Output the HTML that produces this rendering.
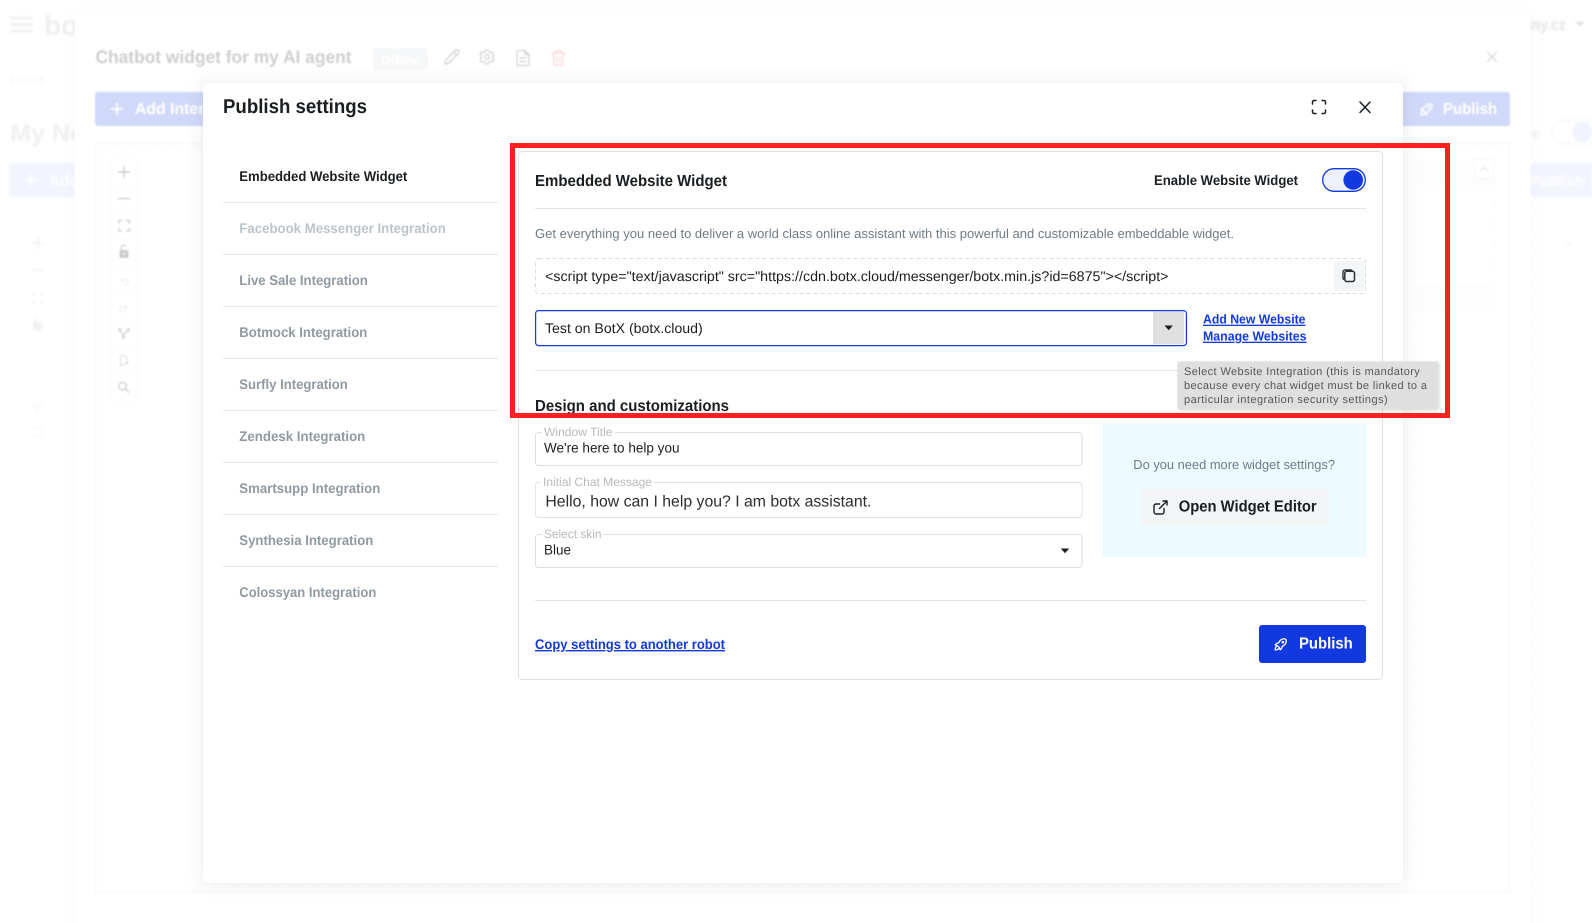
<!DOCTYPE html>
<html lang="en"><head><meta charset="utf-8"><title>Publish settings</title>
<style>
html,body{margin:0;padding:0;background:#fff;width:1592px;height:923px;overflow:hidden}
svg{display:block}
text{font-family:"Liberation Sans",Arial,sans-serif;white-space:pre;text-rendering:geometricPrecision}
.b{font-weight:700}
.ic{fill:none;stroke-linecap:round;stroke-linejoin:round}
</style></head><body>
<svg xmlns="http://www.w3.org/2000/svg" width="1592" height="923" viewBox="0 0 1592 923">
<defs>
<pattern id="dots" width="20" height="20" patternUnits="userSpaceOnUse" x="15" y="-16"><rect x="0" y="0" width="1" height="1" fill="#ececec"/></pattern>
<pattern id="dots2" width="20" height="20" patternUnits="userSpaceOnUse" x="15" y="-6"><rect x="0" y="0" width="1" height="1" fill="#f6f6f6"/></pattern>
<filter id="bl" x="-5%" y="-5%" width="110%" height="110%"><feGaussianBlur stdDeviation="0.7"/></filter>
<filter id="bl2" x="-5%" y="-5%" width="110%" height="110%"><feGaussianBlur stdDeviation="1"/></filter>
<filter id="sh" x="-5%" y="-5%" width="110%" height="110%"><feDropShadow dx="0" dy="0" stdDeviation="9" flood-color="#000" flood-opacity=".09"/></filter>
<filter id="sh2" x="-5%" y="-5%" width="110%" height="110%"><feDropShadow dx="0" dy="0" stdDeviation="10" flood-color="#000" flood-opacity=".02"/></filter>
<filter id="tt" x="-5%" y="-10%" width="110%" height="120%"><feDropShadow dx="1" dy="1" stdDeviation="1.5" flood-color="#000" flood-opacity=".14"/></filter>
<clipPath id="leftclip"><rect x="0" y="0" width="75" height="923"/></clipPath>
<clipPath id="rightclip"><rect x="1530" y="0" width="62" height="923"/></clipPath>
<clipPath id="bgclip"><rect x="75" y="15" width="1455" height="908"/></clipPath>
</defs>

<!-- base layer (furthest back) -->
<g filter="url(#bl2)">
  <g clip-path="url(#leftclip)">
    <g stroke="#eee" stroke-width="2.4"><path d="M11 18H33M11 24.500H33M11 31H33"/></g>
    <text x="44" y="35" class="b" font-size="28" fill="#efefef" textLength="44" lengthAdjust="spacingAndGlyphs">bot</text>
    <text x="10" y="84" font-size="12" fill="#f5f5f5" textLength="34" lengthAdjust="spacingAndGlyphs">Home</text>
    <text x="10" y="141" class="b" font-size="24" fill="#efefef" textLength="84" lengthAdjust="spacingAndGlyphs">My Not</text>
    <rect x="9" y="163" width="80" height="34" rx="3" fill="#f3f5fe"/>
    <path d="M25 180H37M31 174V186" stroke="#fff" stroke-width="2"/>
    <text x="49" y="186" class="b" font-size="16" fill="#fff" textLength="30" lengthAdjust="spacingAndGlyphs">Add</text>
    <rect x="0" y="214" width="75" height="709" fill="url(#dots2)"/>
    <g stroke="#f1f1f1" stroke-width="1.500" fill="none">
      <path d="M32 243H44M38 237V249M32 270H44"/>
      <path d="M33 296V293H36M40 293H43V296M43 300V303H40M36 303H33V300"/>
    </g>
    <rect x="33" y="322" width="9" height="8" rx="1" fill="#f1f1f1"/>
    <path d="M35 322v-2a2.500 2.500 0 0 1 4.500-1.500" fill="none" stroke="#f1f1f1" stroke-width="1.200"/>
    <path d="M33 404L37 408V413M41 404L37 408" stroke="#f3f3f3" stroke-width="1.500" fill="none"/>
    <path d="M34 428h6l2 2v7h-8z" stroke="#f5f5f5" fill="none"/>
  </g>
  <g clip-path="url(#rightclip)">
    <text x="1486" y="30" class="b" font-size="16" fill="#e4e4e4" textLength="80" lengthAdjust="spacingAndGlyphs">company.cz</text>
    <path d="M1575 21.500h9.500l-4.750 5.500z" fill="#e4e4e4"/>
    <text x="1510" y="138" font-size="14" class="b" fill="#efefef" textLength="30" lengthAdjust="spacingAndGlyphs">Live</text>
    <rect x="1552" y="120.500" width="50" height="23" rx="11.500" fill="#fff" stroke="#f1f3fb"/>
    <circle cx="1582" cy="132" r="10" fill="#f1f3fd"/>
    <rect x="1530" y="163" width="80" height="34" rx="3" fill="#f3f5fe"/>
    <text x="1530" y="186" class="b" font-size="16" fill="#fff" textLength="54" lengthAdjust="spacingAndGlyphs">Publish</text>
    <rect x="1530" y="214" width="62" height="709" fill="url(#dots2)"/>
    <path d="M1564 213l5 3.500 5-3.500" transform="translate(0 28)" fill="none" stroke="#f3f3f3"/>
  </g>
</g>

<!-- second layer -->
<rect x="75" y="15" width="1455" height="920" fill="#fff" filter="url(#sh2)"/>
<g clip-path="url(#bgclip)" filter="url(#bl)">
  <text x="95.500" y="63" class="b" font-size="18" fill="#cfcfcf" textLength="256" lengthAdjust="spacingAndGlyphs">Chatbot widget for my AI agent</text>
  <rect x="373" y="48" width="55" height="22" rx="3" fill="#f5f7f8"/>
  <text x="381" y="65" class="b" font-size="14" fill="#fff" textLength="39" lengthAdjust="spacingAndGlyphs">Offline</text>
  <g class="ic" stroke="#d4d4d4" stroke-width="1.300">
    <path d="M445 64l1-4 9-9.500c1-1 2-1 3 0s1 2 0 3l-9 9.500z M453.500 52l3.500 3.500"/>
    <circle cx="487" cy="57" r="2.300"/>
    <path d="M485.500 50h3l.5 1.800 1.700.9 1.800-.5 1.500 2.600-1.300 1.300v1.900l1.300 1.300-1.500 2.600-1.800-.5-1.700.9-.5 1.800h-3l-.5-1.800-1.700-.9-1.800.5-1.500-2.600 1.300-1.300v-1.900l-1.300-1.300 1.500-2.600 1.800.5 1.700-.9z"/>
    <path d="M518 50.500h7l4 4v10a1 1 0 0 1-1 1h-10a1 1 0 0 1-1-1v-13a1 1 0 0 1 1-1z M525 50.500v4h4 M520 58h6M520 61.500h6"/>
  </g>
  <g class="ic" stroke="#fcd8d8" stroke-width="1.300"><path d="M552 53h13M556 53v-1.500a1 1 0 0 1 1-1h3a1 1 0 0 1 1 1V53M553.500 53l.8 11a1.500 1.500 0 0 0 1.500 1h5.400a1.500 1.500 0 0 0 1.500-1l.8-11M557 56.500v5.500M560 56.500v5.500"/></g>
  <path d="M1487 52l10 10M1497 52l-10 10" stroke="#d4d4d4" stroke-width="1.200" fill="none"/>
  <rect x="95" y="92" width="130" height="34" rx="3" fill="#d0d9f9"/>
  <path d="M111 109H123M117 103V115" stroke="#fff" stroke-width="1.800"/>
  <text x="135" y="114" class="b" font-size="16" fill="#fff" textLength="78" lengthAdjust="spacingAndGlyphs">Add Intent</text>
  <rect x="1380" y="92" width="130" height="34" rx="3" fill="#d0d9f9"/>
  <g transform="translate(1418.500 101) scale(.68)" class="ic" stroke="#fff" stroke-width="2"><path d="M4 13a8 8 0 0 1 7 7a6 6 0 0 0 3-5a9 9 0 0 0 6-8a3 3 0 0 0-3-3a9 9 0 0 0-8 6a6 6 0 0 0-5 3"/><path d="M7 14a6 6 0 0 0-3 6a6 6 0 0 0 6-3"/><circle cx="15" cy="9" r="1"/></g>
  <text x="1443" y="114" class="b" font-size="16" fill="#fff" textLength="54" lengthAdjust="spacingAndGlyphs">Publish</text>
  <rect x="95.500" y="143.500" width="1414" height="748" fill="#fff" stroke="#f4f4f4"/>
  <rect x="96" y="144" width="1413" height="747" fill="url(#dots)"/>
  <rect x="1410" y="159" width="84" height="26" fill="#fdfdfd"/>
  <rect x="1410" y="185" width="84" height="125" fill="#fff" stroke="#fcfcfc"/>
  <rect x="1410" y="285" width="84" height="27" fill="#fdfdfd"/>
  <rect x="1474.500" y="159.500" width="19" height="19" fill="#fff" stroke="#f6f6f6"/>
  <path d="M1480 171l4-3.500 4 3.500" fill="none" stroke="#e2e2e2"/>
  <!-- toolbar -->
  <rect x="110.500" y="158.500" width="27" height="243" fill="#fff" stroke="#fafafa"/>
  <path d="M110 185.500h28M110 212.500h28M110 239.500h28M110 266.500h28M110 293.500h28M110 320.500h28M110 347.500h28M110 374.500h28" stroke="#fafafa"/>
  <path d="M118 172H130M124 166V178M118 198.500H130" stroke="#ccc" stroke-width="1.500" fill="none"/>
  <path d="M119 224V220.500H122M126 220.500H129.500V224M129.500 228V231H126M122 231H119V228" stroke="#ccc" stroke-width="1.300" fill="none"/>
  <rect x="119.500" y="250" width="9" height="8" rx="1" fill="#ccc"/><path d="M121.500 250v-2.500a2.500 2.500 0 0 1 4.500-1.200" fill="none" stroke="#ccc" stroke-width="1.200"/><circle cx="124" cy="254" r="1" fill="#fff"/>
  <path d="M121 280h5a2.500 2.500 0 0 1 0 5h-2M121 280l2-2M121 280l2 2" fill="none" stroke="#ececec"/>
  <path d="M127 307h-5a2.500 2.500 0 0 0 0 5h2M127 307l-2-2M127 307l-2 2" fill="none" stroke="#ececec"/>
  <g class="ic" stroke="#ccc" stroke-width="1.100"><circle cx="120" cy="330" r="1.200"/><circle cx="128" cy="330" r="1.200"/><circle cx="123.500" cy="337" r="1.200"/><path d="M120.500 331.500l2.500 2.500v2M127.500 331.500l-3.500 2.500"/></g>
  <path d="M120.500 355.500h4l2.500 2.500v2M120.500 355.500v9.500h5M125 362.500h3l-1.500-1.500M128 362.500l-1.500 1.500" fill="none" stroke="#d6d6d6"/>
  <circle cx="122.500" cy="386" r="3.700" fill="none" stroke="#ccc" stroke-width="1.400"/><path d="M125.500 389l3.500 3.500" stroke="#ccc" stroke-width="1.500"/>
</g>

<!-- modal -->
<rect x="203" y="83" width="1200" height="800" rx="6" fill="#fff" filter="url(#sh)"/>
<text x="223" y="113" class="b" font-size="20" fill="#1a1e21" textLength="144" lengthAdjust="spacingAndGlyphs">Publish settings</text>
<path d="M1312.500 104V102a1.500 1.500 0 0 1 1.500-1.500H1316M1322 100.500h2a1.500 1.500 0 0 1 1.500 1.500V104M1325.500 110v2a1.500 1.500 0 0 1-1.500 1.500H1322M1316 113.500h-2a1.500 1.500 0 0 1-1.500-1.500v-2" fill="none" stroke="#1a1e21" stroke-width="1.500" stroke-linecap="round"/>
<path d="M1360 102l10 10.500M1370 102l-10 10.500" stroke="#1a1e21" stroke-width="1.500" stroke-linecap="round"/>

<!-- sidebar -->
<g class="b" font-size="14">
<text x="239.300" y="181" fill="#1a1e21" textLength="168" lengthAdjust="spacingAndGlyphs">Embedded Website Widget</text>
<text x="239.300" y="233" fill="#bcc4ca" textLength="206.500" lengthAdjust="spacingAndGlyphs">Facebook Messenger Integration</text>
<text x="239.300" y="285" fill="#8e9aa1" textLength="128.500" lengthAdjust="spacingAndGlyphs">Live Sale Integration</text>
<text x="239.300" y="337" fill="#8e9aa1" textLength="128" lengthAdjust="spacingAndGlyphs">Botmock Integration</text>
<text x="239.300" y="389" fill="#8e9aa1" textLength="108.500" lengthAdjust="spacingAndGlyphs">Surfly Integration</text>
<text x="239.300" y="441" fill="#8e9aa1" textLength="126" lengthAdjust="spacingAndGlyphs">Zendesk Integration</text>
<text x="239.300" y="493" fill="#8e9aa1" textLength="141" lengthAdjust="spacingAndGlyphs">Smartsupp Integration</text>
<text x="239.300" y="545" fill="#8e9aa1" textLength="134" lengthAdjust="spacingAndGlyphs">Synthesia Integration</text>
<text x="239.300" y="597" fill="#8e9aa1" textLength="137" lengthAdjust="spacingAndGlyphs">Colossyan Integration</text>
</g>
<path d="M223 202.500H498M223 254.500H498M223 306.500H498M223 358.500H498M223 410.500H498M223 462.500H498M223 514.500H498M223 566.500H498" stroke="#e3e6e8"/>

<!-- card -->
<rect x="518.500" y="151.500" width="864" height="528" rx="4" fill="#fff" stroke="#dfdfdf"/>
<text x="535" y="186" class="b" font-size="16" fill="#1a1e21" textLength="192" lengthAdjust="spacingAndGlyphs">Embedded Website Widget</text>
<text x="1154" y="185" class="b" font-size="14" fill="#1a1e21" textLength="144" lengthAdjust="spacingAndGlyphs">Enable Website Widget</text>
<rect x="1322.700" y="168.700" width="42.600" height="22.600" rx="11.300" fill="#eef1fd" stroke="#1239e0" stroke-width="1.300"/>
<circle cx="1353.200" cy="180" r="9.800" fill="#1239e0"/>
<path d="M535 208.500H1366" stroke="#e3e6e8"/>
<text x="535" y="238" font-size="13" fill="#6e7c87" textLength="699" lengthAdjust="spacingAndGlyphs">Get everything you need to deliver a world class online assistant with this powerful and customizable embeddable widget.</text>

<rect x="535.500" y="258.500" width="830" height="35" rx="3" fill="#fff" stroke="#dcdcdc" stroke-dasharray="4 3"/>
<text x="545" y="281" font-size="14" fill="#1a1e21" textLength="623.500" lengthAdjust="spacingAndGlyphs">&lt;script type="text/javascript" src="https://cdn.botx.cloud/messenger/botx.min.js?id=6875"&gt;&lt;/script&gt;</text>
<rect x="1334" y="261" width="30" height="30" rx="2" fill="#f3f6f7"/>
<rect x="1344.800" y="271.300" width="9.700" height="10.200" rx="2" fill="none" stroke="#2b3035" stroke-width="1.500"/>
<path d="M1344 279.500a1.500 1.500 0 0 1-1-1.500v-6a2 2 0 0 1 2-2h5.500a1.500 1.500 0 0 1 1.500 1" fill="none" stroke="#2b3035" stroke-width="1.400"/>

<rect x="535.600" y="310.600" width="650.800" height="35" rx="3" fill="#fff" stroke="#1239e0" stroke-width="1.200"/>
<text x="545" y="333" font-size="14" fill="#1a1e21" textLength="157.700" lengthAdjust="spacingAndGlyphs">Test on BotX (botx.cloud)</text>
<rect x="1153" y="311.700" width="31" height="32.500" fill="#e0e0e0"/>
<path d="M1164.500 325.500h8.400l-4.200 4.700z" fill="#1a1e21"/>
<text x="1203" y="323.700" class="b" font-size="13" fill="#1239e0" textLength="102.500" lengthAdjust="spacingAndGlyphs" text-decoration="underline">Add New Website</text>
<text x="1203" y="340.700" class="b" font-size="13" fill="#1239e0" textLength="103.500" lengthAdjust="spacingAndGlyphs" text-decoration="underline">Manage Websites</text>
<path d="M535 370.500H1366" stroke="#e3e6e8"/>
<text x="535" y="411" class="b" font-size="16" fill="#1a1e21" textLength="194" lengthAdjust="spacingAndGlyphs">Design and customizations</text>

<!-- fields -->
<rect x="535.500" y="432.500" width="546.500" height="33" rx="3" fill="#fff" stroke="#dfdfdf"/>
<rect x="542" y="430" width="73" height="5" fill="#fff"/>
<text x="544" y="436" font-size="12" fill="#b9b9b9" textLength="68.500" lengthAdjust="spacingAndGlyphs">Window Title</text>
<text x="544" y="452.700" font-size="14" fill="#1a1e21" textLength="135.500" lengthAdjust="spacingAndGlyphs">We're here to help you</text>

<rect x="535.500" y="482.500" width="546.500" height="35" rx="3" fill="#fff" stroke="#e3e3e3"/>
<rect x="541" y="480" width="113" height="5" fill="#fff"/>
<text x="543" y="486" font-size="12" fill="#b9b9b9" textLength="109" lengthAdjust="spacingAndGlyphs">Initial Chat Message</text>
<text x="545.400" y="506.700" font-size="16" fill="#2a2e31" textLength="326" lengthAdjust="spacingAndGlyphs">Hello, how can I help you? I am botx assistant.</text>

<rect x="535.500" y="534.500" width="546.500" height="33" rx="3" fill="#fff" stroke="#dfdfdf"/>
<rect x="542" y="532" width="61" height="5" fill="#fff"/>
<text x="544" y="538" font-size="12" fill="#b9b9b9" textLength="57.500" lengthAdjust="spacingAndGlyphs">Select skin</text>
<text x="544" y="554.700" font-size="14" fill="#1a1e21" textLength="27" lengthAdjust="spacingAndGlyphs">Blue</text>
<path d="M1060.800 548.500h8.400l-4.200 4.700z" fill="#1a1e21"/>

<!-- help panel -->
<rect x="1102" y="424" width="264" height="133" fill="#ebfbff"/>
<text x="1133.300" y="469" font-size="13" fill="#6e7c87" textLength="201.700" lengthAdjust="spacingAndGlyphs">Do you need more widget settings?</text>
<rect x="1140" y="489" width="189" height="36" rx="2" fill="#f3f6f7"/>
<g class="ic" stroke="#1a1e21" stroke-width="1.400">
  <path d="M1164 508.500v3.500a2 2 0 0 1-2 2h-6a2 2 0 0 1-2-2v-6a2 2 0 0 1 2-2h3.500"/>
  <path d="M1159.500 508.500l7.500-7.500M1163 501h4v4"/>
</g>
<text x="1178.700" y="511.500" class="b" font-size="16" fill="#1a1e21" textLength="138" lengthAdjust="spacingAndGlyphs">Open Widget Editor</text>

<path d="M535 600.500H1366" stroke="#e3e6e8"/>
<text x="535" y="649" class="b" font-size="14" fill="#1239e0" textLength="190" lengthAdjust="spacingAndGlyphs" text-decoration="underline">Copy settings to another robot</text>
<rect x="1259" y="625" width="107" height="38" rx="3" fill="#1239e0"/>
<g transform="translate(1272.500 636) scale(.69)" class="ic" stroke="#fff" stroke-width="1.900"><path d="M4 13a8 8 0 0 1 7 7a6 6 0 0 0 3-5a9 9 0 0 0 6-8a3 3 0 0 0-3-3a9 9 0 0 0-8 6a6 6 0 0 0-5 3"/><path d="M7 14a6 6 0 0 0-3 6a6 6 0 0 0 6-3"/><circle cx="15" cy="9" r="1"/></g>
<text x="1299" y="648.700" class="b" font-size="16" fill="#fff" textLength="53.700" lengthAdjust="spacingAndGlyphs">Publish</text>

<!-- tooltip -->
<rect x="1177.500" y="361.500" width="261" height="48" rx="2" fill="#dfdfdf" filter="url(#tt)"/>
<g font-size="11" fill="#555">
<text x="1184" y="375" textLength="235.800" lengthAdjust="spacing">Select Website Integration (this is mandatory</text>
<text x="1184" y="389" textLength="243" lengthAdjust="spacing">because every chat widget must be linked to a</text>
<text x="1184" y="403" textLength="203.700" lengthAdjust="spacing">particular integration security settings)</text>
</g>

<!-- red highlight -->
<rect x="512.500" y="145.500" width="935" height="270" fill="none" stroke="#ff2020" stroke-width="5"/>
</svg>
</body></html>
